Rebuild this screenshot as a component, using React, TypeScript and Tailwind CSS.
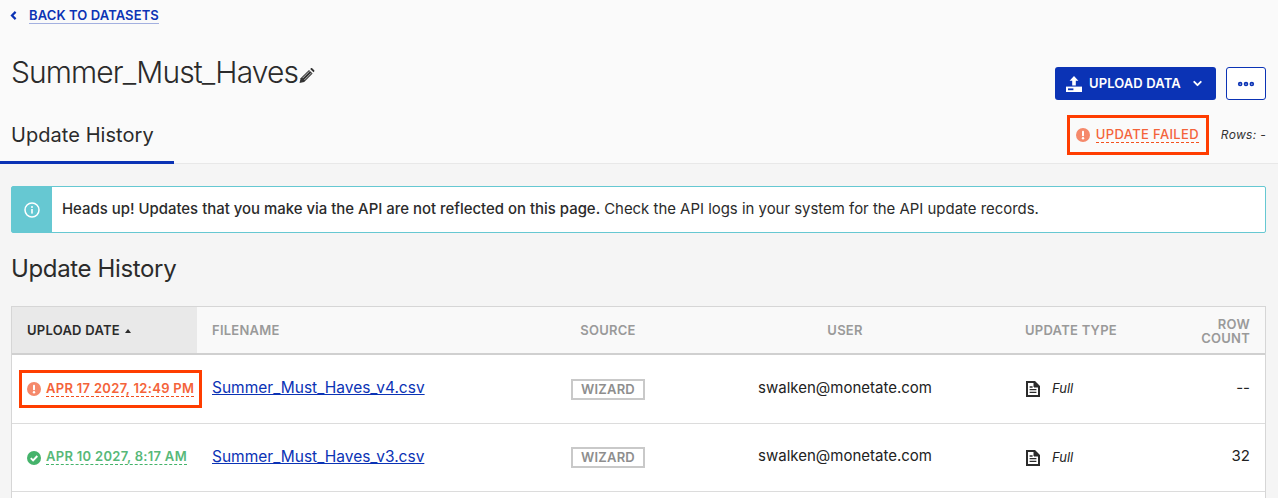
import { ChevronDown, Ellipsis } from 'lucide-react';

const font = { fontFamily: 'Inter, sans-serif' };

function AlertDot() {
  return (
    <svg viewBox="0 0 14 14" className="h-[14px] w-[14px] shrink-0" aria-hidden="true">
      <circle cx="7" cy="7" r="7" fill="#f5896b" />
      <rect x="6" y="2.8" width="2" height="5.4" rx="0.8" fill="#fff" />
      <circle cx="7" cy="10.2" r="1.2" fill="#fff" />
    </svg>
  );
}

function CheckDot() {
  return (
    <svg viewBox="0 0 14 14" className="h-[14px] w-[14px] shrink-0" aria-hidden="true">
      <circle cx="7" cy="7" r="7" fill="#45b36b" />
      <path d="M3.8 7.2 6.1 9.5 10.3 5" fill="none" stroke="#fff" strokeWidth="1.9" />
    </svg>
  );
}

function PencilIcon() {
  return (
    <svg viewBox="0 0 16 16" className="mt-[6px] ml-px h-[17px] w-[16px] shrink-0" aria-hidden="true">
      <path d="M0.5 15.5 1.6 10.8 10 2.4l3.6 3.6-8.4 8.4z" fill="#333" />
      <path d="M11.2 1.4l.8-.7c.4-.3.8-.3 1.2 0l2 2c.3.4.3.8 0 1.2l-.7.8z" fill="#333" />
      <path d="M3.6 10.6 10.4 3.8M5.4 12.4l6.8-6.8" stroke="#fafafa" strokeWidth="0.7" />
    </svg>
  );
}

function UploadIcon() {
  return (
    <svg viewBox="0 0 16 16" className="h-4 w-4 shrink-0" aria-hidden="true">
      <path d="M8 0 12.4 4.8H9.8V9.6H6.2V4.8H3.6z" fill="#fff" />
      <path d="M0 10.6h16V16H0z" fill="#fff" />
      <rect x="2" y="12.4" width="5.4" height="1.8" fill="#0b33b5" />
    </svg>
  );
}

function FileIcon() {
  return (
    <svg viewBox="0 0 14 16" className="h-4 w-[14px] shrink-0" aria-hidden="true">
      <path d="M1 1h7.6L13 5.4V15H1z" fill="#fff" stroke="#2b2b2b" strokeWidth="2" />
      <path d="M8 1v5h5" fill="#2b2b2b" stroke="#2b2b2b" strokeWidth="1" />
      <path d="M3.6 6h3M3.6 8.6h6.8M3.6 11.4h6.8" stroke="#2b2b2b" strokeWidth="1.3" />
    </svg>
  );
}

function Row({
  status,
  date,
  file,
  count,
}: {
  status: 'failed' | 'ok';
  date: string;
  file: string;
  count: string;
}) {
  return (
    <div
      className={`grid grid-cols-[185px_1fr] items-center border-b border-[#dcdcdc] bg-white ${
        status === 'failed' ? 'h-[69px]' : 'h-[68px]'
      }`}
    >
      <div className="pl-[7px]">
        {status === 'failed' ? (
          <div className="flex h-[38px] w-[183px] items-center gap-[5px] border-[3px] border-[#ff3d00] pl-[5px]">
            <AlertDot />
            <span className="-mt-[2px] border-b border-dashed border-[#f4511e] text-[13px] leading-[16px] font-semibold tracking-[0.3px] whitespace-nowrap text-[#f4633a]">
              {date}
            </span>
          </div>
        ) : (
          <div className="flex h-[38px] items-center gap-[5px] pl-[8px]">
            <CheckDot />
            <span className="-mt-[2px] border-b border-dashed border-[#45b36b] text-[13px] leading-[16px] font-semibold tracking-[0.3px] whitespace-nowrap text-[#57b878]">
              {date}
            </span>
          </div>
        )}
      </div>
      <div className="grid grid-cols-[333px_126px_348px_1fr_60px] items-center pr-[15px] pl-[15px]">
        <a className="-mt-[2px] text-[15.5px] text-[#0b33b5] underline" href="#">
          {file}
        </a>
        <div className="flex justify-center">
          <span className="border-2 border-[#c9c9c9] px-[8px] text-[13px] leading-[17px] font-semibold tracking-[0.2px] text-[#8e8e8e]">
            WIZARD
          </span>
        </div>
        <span className="-mt-[2px] text-center text-[15px] text-[#222]">swalken@monetate.com</span>
        <div className="flex items-center gap-[12px] pl-[7px]">
          <FileIcon />
          <span className="text-[13px] text-[#222] italic">Full</span>
        </div>
        <span className="-mt-[2px] text-right text-[15px] text-[#222]">{count}</span>
      </div>
    </div>
  );
}

export default function App() {
  return (
    <div style={font} className="h-[498px] w-[1278px] overflow-hidden bg-[#f5f5f5] text-[#2b2b2b]">
      <header className="h-[164px] border-b border-[#e8e8e8] bg-[#fafafa]">
        <a href="#" className="flex items-center gap-[12px] pt-[7px] pl-[10px]">
          <svg viewBox="0 0 7 9" className="h-[9px] w-[7px]" aria-hidden="true">
            <path d="M5.6 0.9 2 4.5l3.6 3.6" fill="none" stroke="#0b33b5" strokeWidth="2.2" />
          </svg>
          <span className="border-b border-[#a3b0e0] text-[13px] leading-[16px] font-semibold tracking-[0.1px] text-[#0b33b5]">
            BACK TO DATASETS
          </span>
        </a>
        <div className="flex items-start justify-between pr-[12px] pl-[11px]">
          <div className="mt-[28px] flex items-center">
            <h1 className="text-[30px] leading-[40px] font-light tracking-[-0.9px]">Summer_Must_Haves</h1>
            <PencilIcon />
          </div>
          <div className="mt-[43px] flex items-center gap-[10px]">
            <button className="flex h-[33px] w-[161px] items-center rounded-[3px] bg-[#0b33b5] pl-[11px] text-[13px] font-semibold tracking-[0.1px] text-white">
              <UploadIcon />
              <span className="ml-[7px]">UPLOAD DATA</span>
              <ChevronDown className="ml-[10px] h-[13px] w-[13px]" strokeWidth={3.5} />
            </button>
            <button className="flex h-[33px] w-[40px] items-center justify-center rounded-[3px] border border-[#0b33b5] bg-white">
              <Ellipsis className="h-[20px] w-[20px] text-[#0b33b5]" strokeWidth={3.5} />
            </button>
          </div>
        </div>
        <div className="mt-[15px] flex items-start justify-between pr-[12px]">
          <div className="h-[49px] w-[174px] border-b-[3px] border-[#0b33b5] pt-[6px] pl-[11px] text-[20px] leading-[28px] tracking-[0.06px]">
            Update History
          </div>
          <div className="flex items-center gap-[12px]">
            <div className="flex h-[40px] w-[142px] items-center gap-[6px] border-[3px] border-[#ff3d00] pl-[6px]">
              <AlertDot />
              <span className="-mt-[2px] border-b border-dashed border-[#f4511e] text-[13px] leading-[16px] font-medium tracking-[0.35px] whitespace-nowrap text-[#f4633a]">
                UPDATE FAILED
              </span>
            </div>
            <span className="text-[12px] tracking-[0.3px] text-[#333] italic">Rows: -</span>
          </div>
        </div>
      </header>

      <main className="pr-[12px] pl-[11px]">
        <div className="mt-[22px] flex h-[47px] rounded-[2px] border border-[#66c8d2] bg-white">
          <div className="flex w-[40px] items-center justify-center bg-[#66c8d2]">
            <svg viewBox="0 0 16 16" className="h-4 w-4" aria-hidden="true">
              <circle cx="8" cy="8" r="7" fill="none" stroke="#fff" strokeWidth="1.5" />
              <rect x="7.2" y="7" width="1.6" height="4.6" fill="#fff" />
              <circle cx="8" cy="4.9" r="1" fill="#fff" />
            </svg>
          </div>
          <p className="flex items-center pl-[10px] text-[14.93px]">
            <span className="font-medium">Heads up! Updates that you make via the API are not reflected on this page.</span>
            <span className="ml-1">Check the API logs in your system for the API update records.</span>
          </p>
        </div>

        <h2 className="mt-[19px] text-[24px] leading-[34px] font-normal tracking-[-0.36px]">Update History</h2>

        <div className="mt-[20px] border-x border-t border-[#d6d6d6]">
          <div className="grid h-[48px] grid-cols-[185px_1fr] items-stretch border-b-[2px] border-[#d0d0d0] bg-[#f9f9f9] pt-0 text-[13px] font-semibold tracking-[0.25px] text-[#9a9a9a]">
            <div className="flex items-center gap-[5px] bg-[#e9e9e9] pt-[2px] pl-[15px] text-[#2b2b2b]">
              UPLOAD DATE
              <span className="h-0 w-0 border-x-[3px] border-b-[4px] border-x-transparent border-b-[#2b2b2b]" />
            </div>
            <div className="grid grid-cols-[333px_126px_348px_1fr_60px] items-center pt-[2px] pr-[15px] pl-[15px]">
              <span>FILENAME</span>
              <span className="text-center">SOURCE</span>
              <span className="text-center">USER</span>
              <span className="pl-[6px]">UPDATE TYPE</span>
              <span className="text-right leading-[14px]">
                ROW
                <br />
                COUNT
              </span>
            </div>
          </div>
          <Row status="failed" date="APR 17 2027, 12:49 PM" file="Summer_Must_Haves_v4.csv" count="--" />
          <Row status="ok" date="APR 10 2027, 8:17 AM" file="Summer_Must_Haves_v3.csv" count="32" />
          <div className="h-[20px] bg-white" />
        </div>
      </main>
    </div>
  );
}
